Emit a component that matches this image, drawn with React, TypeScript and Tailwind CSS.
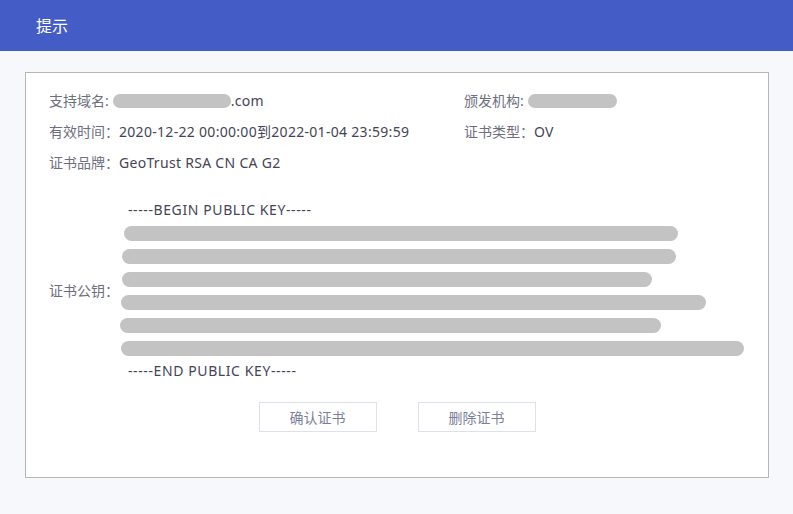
const font = "font-['Noto_Sans','Noto_Sans_CJK_SC',sans-serif]";

const keyBars = [
  { left: "ml-[4px]", width: "w-[554px]" },
  { left: "ml-[2px]", width: "w-[554px]" },
  { left: "ml-[2px]", width: "w-[530px]" },
  { left: "ml-[1px]", width: "w-[585px]" },
  { left: "ml-0", width: "w-[541px]" },
  { left: "ml-[1px]", width: "w-[623px]" },
];

function Blur({ className }: { className: string }) {
  return <span className={`inline-block rounded-full bg-[#c3c3c3] ${className}`} />;
}

export default function App() {
  return (
    <div className={`min-h-[514px] w-full bg-[#f7f8fc] ${font}`}>
      <header className="flex h-[51px] items-center bg-[#445cc6] pl-9 text-[16px] text-white">
        提示
      </header>

      <div className="px-[25px] pt-[21px]">
        <div className="h-[406px] w-[744px] border border-[#b5b5b5] bg-white pl-[23px] pt-[12px] text-[14px]">
          <div className="flex leading-[31px]">
            <div className="w-[415px]">
              <div className="flex items-center">
                <span className="text-[#6e6e7e]">支持域名:</span>
                <Blur className="ml-[4px] h-[14px] w-[118px]" />
                <span className="tracking-[0.3px] text-[#444455]">.com</span>
              </div>
              <div>
                <span className="text-[#6e6e7e]">有效时间：</span>
                <span className="tracking-[0.3px] text-[#444455]">2020-12-22 00:00:00到2022-01-04 23:59:59</span>
              </div>
              <div>
                <span className="text-[#6e6e7e]">证书品牌：</span>
                <span className="tracking-[0.3px] text-[#444455]">GeoTrust RSA CN CA G2</span>
              </div>
            </div>
            <div>
              <div className="flex items-center">
                <span className="text-[#6e6e7e]">颁发机构:</span>
                <Blur className="ml-[4px] h-[14px] w-[89px]" />
              </div>
              <div>
                <span className="text-[#6e6e7e]">证书类型：</span>
                <span className="tracking-[0.3px] text-[#444455]">OV</span>
              </div>
            </div>
          </div>

          <div className="mt-[20px] flex items-center">
            <span className="w-[71px] text-[#6e6e7e]">证书公钥：</span>
            <div className="flex flex-col">
              <div className="pl-[8px] leading-6 tracking-[0.6px] text-[#444455]">-----BEGIN PUBLIC KEY-----</div>
              <div className="mt-[4px] flex flex-col gap-2">
                {keyBars.map((b, i) => (
                  <Blur key={i} className={`h-[15px] ${b.left} ${b.width}`} />
                ))}
              </div>
              <div className="mt-[3px] pl-[8px] leading-6 tracking-[0.6px] text-[#444455]">-----END PUBLIC KEY-----</div>
            </div>
          </div>

          <div className="mt-[19px] flex justify-center gap-[41px] pr-[23px]">
            <button className="h-[30px] w-[118px] border border-[#dde1ec] bg-white text-[14px] text-[#7b7f99]">
              确认证书
            </button>
            <button className="h-[30px] w-[118px] border border-[#dde1ec] bg-white text-[14px] text-[#7b7f99]">
              删除证书
            </button>
          </div>
        </div>
      </div>
    </div>
  );
}
